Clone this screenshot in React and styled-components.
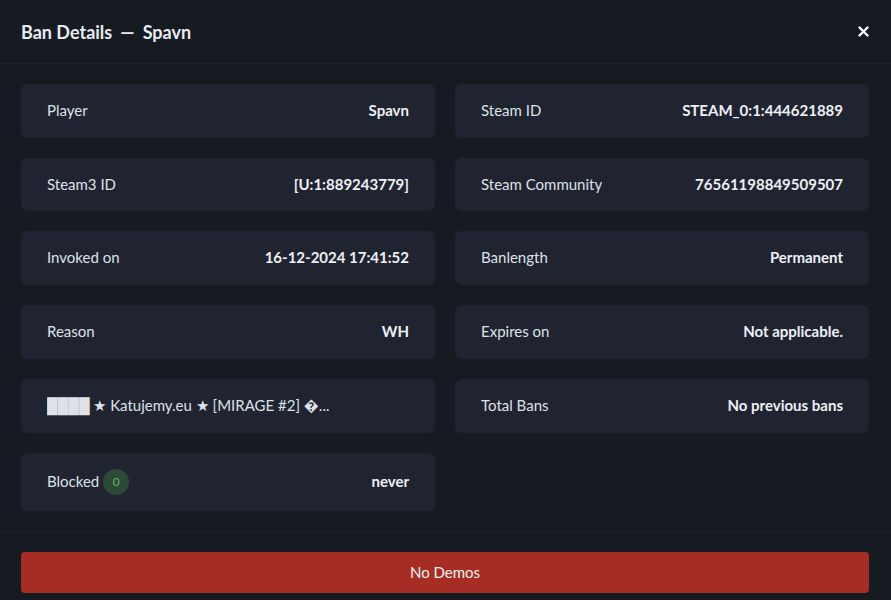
import React from "react";
import styled, { createGlobalStyle } from "styled-components";

const Global = createGlobalStyle`
  html, body { margin: 0; padding: 0; background: #161a21; }
  body { font-family: Lato, "Noto Sans", "Liberation Sans", sans-serif; color: #e6e9ef; }
  * { box-sizing: border-box; }
`;

const Modal = styled.div`
  width: 891px;
  height: 600px;
  background: #161a21;
  display: flex;
  flex-direction: column;
  overflow: hidden;
  & > * { flex-shrink: 0; }
`;

const Header = styled.header`
  height: 64px;
  padding: 0 22px 0 21px;
  display: flex;
  align-items: center;
  justify-content: space-between;
  border-bottom: 1px solid #1f232b;
`;

const Title = styled.h2`
  margin: 0;
  font-size: 18px;
  font-weight: 700;
  color: #e8ebf0;
  display: flex;
  gap: 8px;
`;

const CloseButton = styled.button`
  background: none;
  border: none;
  padding: 0;
  color: #ffffff;
  display: flex;
  cursor: pointer;
`;

const Body = styled.div`
  padding: 20px 22px 20px 21px;
  display: grid;
  grid-template-columns: 1fr 1fr;
  gap: 20px;
  border-bottom: 1px solid #1f232b;
`;

const Card = styled.div`
  background: #1f2430;
  border-radius: 6px;
  padding: 16px 26px;
  display: flex;
  align-items: center;
  justify-content: space-between;
  font-size: 15px;
  line-height: 21.7px;
  min-width: 0;
`;

const Label = styled.span`
  color: #dde1e8;
  display: flex;
  align-items: center;
  gap: 4px;
  white-space: nowrap;
  overflow: hidden;
  text-overflow: ellipsis;
`;

const Value = styled.span`
  color: #eef0f4;
  font-weight: 700;
  white-space: nowrap;
`;

const Badge = styled.span`
  width: 26px;
  height: 26px;
  border-radius: 50%;
  background: #2c4a35;
  color: #5cba5c;
  font-size: 12px;
  display: inline-flex;
  align-items: center;
  justify-content: center;
`;

const Footer = styled.footer`
  padding: 20px 22px 20px 21px;
`;

const DemoButton = styled.button`
  width: 100%;
  height: 41px;
  border: none;
  border-radius: 4px;
  background: #a52d24;
  color: #f2f2f2;
  font-family: inherit;
  font-size: 15px;
  cursor: pointer;
`;

const rows = [
  ["Player", "Spavn"],
  ["Steam ID", "STEAM_0:1:444621889"],
  ["Steam3 ID", "[U:1:889243779]"],
  ["Steam Community", "76561198849509507"],
  ["Invoked on", "16-12-2024 17:41:52"],
  ["Banlength", "Permanent"],
  ["Reason", "WH"],
  ["Expires on", "Not applicable."],
  ["████ ★ Katujemy.eu ★ [MIRAGE #2] �...", ""],
  ["Total Bans", "No previous bans"],
];

export default function App() {
  return (
    <>
      <Global />
      <Modal>
        <Header>
          <Title>
            <span>Ban Details</span>
            <span>—</span>
            <span>Spavn</span>
          </Title>
          <CloseButton aria-label="Close">
            <svg width="11" height="11" viewBox="0 0 11 11">
              <path d="M1.5 1.5 L9.5 9.5 M9.5 1.5 L1.5 9.5" stroke="currentColor" strokeWidth="2.4" strokeLinecap="round" />
            </svg>
          </CloseButton>
        </Header>
        <Body>
          {rows.map(([l, v], i) => (
            <Card key={i}>
              <Label>{l}</Label>
              {v && <Value>{v}</Value>}
            </Card>
          ))}
          <Card>
            <Label>
              Blocked <Badge>0</Badge>
            </Label>
            <Value>never</Value>
          </Card>
        </Body>
        <Footer>
          <DemoButton>No Demos</DemoButton>
        </Footer>
      </Modal>
    </>
  );
}
